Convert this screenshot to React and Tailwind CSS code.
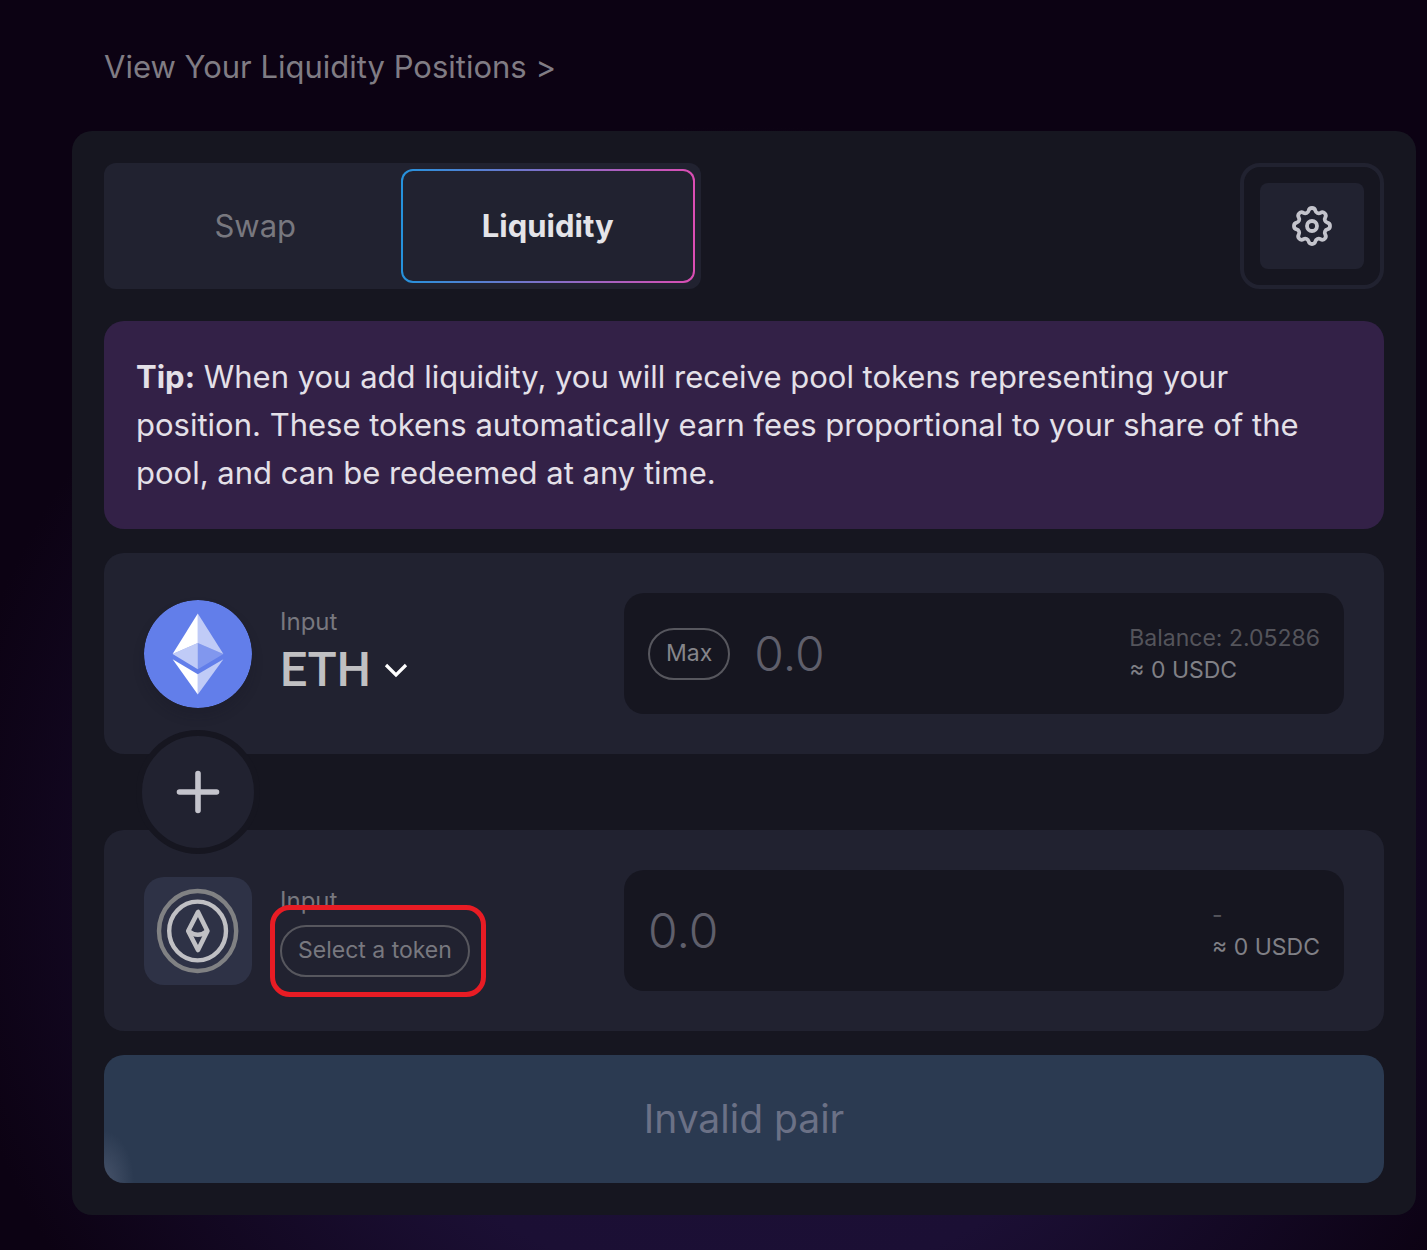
import React from "react";

const COG =
  "M10.325 4.317c.426-1.756 2.924-1.756 3.35 0a1.724 1.724 0 002.573 1.066c1.543-.94 3.31.826 2.37 2.37a1.724 1.724 0 001.065 2.572c1.756.426 1.756 2.924 0 3.35a1.724 1.724 0 00-1.066 2.573c.94 1.543-.826 3.31-2.37 2.37a1.724 1.724 0 00-2.572 1.065c-.426 1.756-2.924 1.756-3.35 0a1.724 1.724 0 00-2.573-1.066c-1.543.94-3.31-.826-2.37-2.37a1.724 1.724 0 00-1.065-2.572c-1.756-.426-1.756-2.924 0-3.35a1.724 1.724 0 001.066-2.573c-.94-1.543.826-3.31 2.37-2.37.996.608 2.296.07 2.572-1.065z";

function CogIcon() {
  return (
    <svg viewBox="0 0 24 24" className="size-12" fill="none" stroke="#c4c4cc" strokeWidth="1.9" aria-hidden="true">
      <path d={COG} strokeLinejoin="round" />
      <circle cx="12" cy="12" r="2.5" />
    </svg>
  );
}

function EthLogo() {
  return (
    <svg viewBox="0 0 108 108" className="size-[108px] shrink-0 rounded-full shadow-[0_8px_12px_rgba(22,22,33,0.2)]" aria-hidden="true">
      <circle cx="54" cy="54" r="54" fill="#627eea" />
      <g fill="#fff">
        <path d="M53.8 13.5 28.6 54l25.2-11z" />
        <path d="M53.8 13.5 79.4 54 53.8 43z" opacity=".6" />
        <path d="M28.6 54l25.2 15.3V43z" opacity=".6" />
        <path d="M79.4 54 53.8 69.3V43z" opacity=".2" />
        <path d="M28.6 59.3 53.8 94.5V74.2z" />
        <path d="M79.4 59.3 53.8 94.5V74.2z" opacity=".6" />
      </g>
    </svg>
  );
}

function EmptyTokenLogo() {
  return (
    <svg viewBox="0 0 108 108" className="size-[108px] shrink-0 rounded-[20px] bg-[#2e3246]" fill="none" aria-hidden="true">
      <ellipse cx="53.6" cy="54" rx="38.6" ry="40" stroke="#808183" strokeWidth="4.4" />
      <ellipse cx="53.6" cy="54" rx="28.4" ry="29.4" stroke="#c0c0c4" strokeWidth="4.4" />
      <g stroke="#c0c0c4" strokeWidth="4.6" strokeLinejoin="round">
        <path d="M54 35 44.2 54 54 73l9.4-19z" />
        <path d="M44.2 54Q54 61.5 63.4 54" />
      </g>
    </svg>
  );
}

function Amount({ label, max, top }) {
  return (
    <div className="flex h-[121px] w-3/5 items-center rounded-[20px] bg-[#161620] px-6">
      {max && (
        <button type="button" className="mr-6 h-[52px] shrink-0 rounded-full border-2 border-[#57575e] px-4 text-[23px] text-[#85858a]">
          Max
        </button>
      )}
      <input
        type="text"
        aria-label={label}
        placeholder="0.0"
        className="min-w-0 flex-1 bg-transparent text-5xl font-light text-[#c0c0c4] outline-none placeholder:text-[#5f5f6b]"
      />
      <div className="shrink-0 text-[23px] leading-8">
        <div className="text-[#54545b]">{top}</div>
        <div className="text-[#808086]">≈ 0 USDC</div>
      </div>
    </div>
  );
}

export default function App() {
  return (
    <main className="min-h-screen bg-[#0c0213] bg-[radial-gradient(ellipse_56%_60%_at_52%_70%,#1d1038_0%,#1b0f34_55%,#0c0213_100%)] pt-10 pr-[11px] pb-[35px] pl-[72px] font-['Inter',sans-serif]">
      <a href="#positions" className="ml-8 block w-fit text-[31px] leading-[54px] text-[#807c84]">
        View Your Liquidity Positions &gt;
      </a>

      <section className="mt-[37px] rounded-[20px] bg-[#161620] p-8">
        <div className="flex items-stretch justify-between">
          <div className="flex h-[126px] w-[597px] rounded-xl bg-[#212230] p-1.5 text-[31px]">
            <button type="button" className="flex-1 text-[#78787f]">Swap</button>
            <button
              type="button"
              className="flex-1 rounded-xl border-2 border-transparent font-bold text-[#e4e4e8] [background:linear-gradient(#212230,#212230)_padding-box,linear-gradient(90deg,#2592dc,#dc4db4)_border-box]"
            >
              Liquidity
            </button>
          </div>
          <div className="flex rounded-[20px] border-4 border-[#212230] p-4">
            <button type="button" aria-label="Settings" className="flex w-[104px] items-center justify-center rounded-lg bg-[#212230]">
              <CogIcon />
            </button>
          </div>
        </div>

        <p className="mt-8 rounded-[20px] bg-[#332147] p-8 text-[31px] leading-[48px] text-[#e4e0e8]">
          <strong>Tip:</strong> When you add liquidity, you will receive pool tokens representing your position. These
          tokens automatically earn fees proportional to your share of the pool, and can be redeemed at any time.
        </p>

        <div className="mt-6 flex items-center rounded-[20px] bg-[#212230] p-10">
          <div className="flex w-2/5 items-center gap-7">
            <EthLogo />
            <div>
              <div className="text-2xl leading-8 text-[#78787f]">Input</div>
              <button type="button" className="flex items-center gap-3 font-['Roboto',sans-serif] text-5xl leading-[64px] font-medium text-[#c0c0c2]">
                ETH
                <svg viewBox="0 0 26 16" className="h-4 w-[26px]" fill="none" stroke="#fff" strokeWidth="3.2" aria-hidden="true">
                  <path d="M3 3l10 10L23 3" />
                </svg>
              </button>
            </div>
          </div>
          <Amount label="First token amount" max top="Balance: 2.05286" />
        </div>

        <div className="relative z-10 -my-6 ml-8 flex size-[124px] items-center justify-center rounded-full border-[6px] border-[#161620] bg-[#212230]">
          <svg viewBox="0 0 44 44" className="size-11" stroke="#c4c4cc" strokeWidth="5.6" strokeLinecap="round" aria-hidden="true">
            <path d="M22 3.5v37M3.5 22h37" />
          </svg>
        </div>

        <div className="flex items-center rounded-[20px] bg-[#212230] p-10">
          <div className="flex w-2/5 items-center gap-7">
            <EmptyTokenLogo />
            <div>
              <div className="text-2xl leading-8 text-[#78787f]">Input</div>
              <div className="relative mt-2 w-fit">
                <button type="button" className="h-[52px] rounded-full border-2 border-[#57575e] px-4 text-[23px] text-[#78787f]">
                  Select a token
                </button>
                <span className="pointer-events-none absolute -top-5 -right-4 -bottom-5 -left-2.5 rounded-[20px] border-[5px] border-[#e81c24]" />
              </div>
            </div>
          </div>
          <Amount label="Second token amount" top="-" />
        </div>

        <button
          type="button"
          className="mt-6 h-32 w-full rounded-[20px] bg-[#2b3a51] bg-[radial-gradient(ellipse_30px_52px_at_0%_100%,#414e65_20%,#2b3a51_100%)] text-[39px] text-[#6b7186]"
        >
          Invalid pair
        </button>
      </section>
    </main>
  );
}
